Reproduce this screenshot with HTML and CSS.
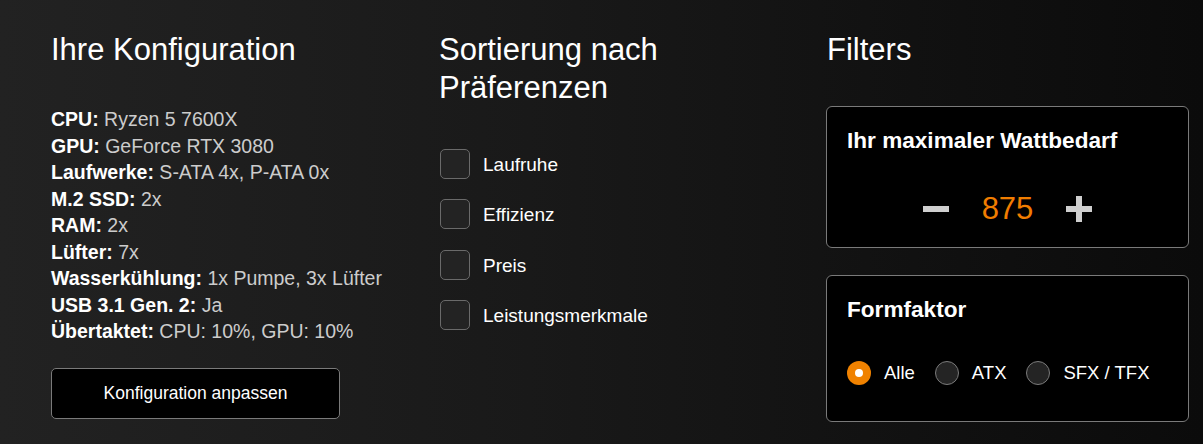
FILE: index.html
```html
<!DOCTYPE html>
<html lang="de">
<head>
<meta charset="utf-8">
<title>Konfiguration</title>
<link rel="stylesheet" href="styles.css">
</head>
<body>
<main class="page">
  <section class="col">
    <h2 class="heading">Ihre Konfiguration</h2>
    <ul class="spec-list">
      <li><b>CPU:</b> Ryzen 5 7600X</li>
      <li><b>GPU:</b> GeForce RTX 3080</li>
      <li><b>Laufwerke:</b> S-ATA 4x, P-ATA 0x</li>
      <li><b>M.2 SSD:</b> 2x</li>
      <li><b>RAM:</b> 2x</li>
      <li><b>Lüfter:</b> 7x</li>
      <li><b>Wasserkühlung:</b> 1x Pumpe, 3x Lüfter</li>
      <li><b>USB 3.1 Gen. 2:</b> Ja</li>
      <li><b>Übertaktet:</b> CPU: 10%, GPU: 10%</li>
    </ul>
    <button class="btn" type="button">Konfiguration anpassen</button>
  </section>

  <section class="col">
    <h2 class="heading">Sortierung nach Präferenzen</h2>
    <div class="check-list">
      <label class="check"><span class="box"></span><span>Laufruhe</span></label>
      <label class="check"><span class="box"></span><span>Effizienz</span></label>
      <label class="check"><span class="box"></span><span>Preis</span></label>
      <label class="check"><span class="box"></span><span>Leistungsmerkmale</span></label>
    </div>
  </section>

  <section class="col">
    <h2 class="heading">Filters</h2>
    <div class="cards">
      <div class="card card-watt">
        <h3 class="card-title">Ihr maximaler Wattbedarf</h3>
        <div class="stepper">
          <span class="step-btn" aria-label="weniger">
            <svg width="26" height="26" viewBox="0 0 26 26"><rect x="0" y="10" width="26" height="6" fill="#cfcfcf"/></svg>
          </span>
          <span class="watt">875</span>
          <span class="step-btn" aria-label="mehr">
            <svg width="26" height="26" viewBox="0 0 26 26"><rect x="0" y="10" width="26" height="6" fill="#cfcfcf"/><rect x="10" y="0" width="6" height="26" fill="#cfcfcf"/></svg>
          </span>
        </div>
      </div>
      <div class="card card-form">
        <h3 class="card-title">Formfaktor</h3>
        <div class="radios">
          <label class="radio"><span class="dot dot-on"></span><span>Alle</span></label>
          <label class="radio"><span class="dot"></span><span>ATX</span></label>
          <label class="radio"><span class="dot"></span><span>SFX / TFX</span></label>
        </div>
      </div>
    </div>
  </section>
</main>
</body>
</html>
```

FILE: styles.css
```css
* { box-sizing: border-box; }

html, body {
  margin: 0;
  height: 100%;
}

body {
  background: linear-gradient(to right, #222222 0%, #1a1a1a 40%, #0b0b0b 100%);
  color: #fff;
  font-family: "Liberation Sans", Arial, Helvetica, sans-serif;
  overflow: hidden;
}

.page {
  display: grid;
  grid-template-columns: 361px 361px 363px;
  column-gap: 27px;
  padding: 31px 0 0 51px;
}

.col {
  display: flex;
  flex-direction: column;
  align-items: flex-start;
}

.heading {
  margin: 0 0 37px;
  font-size: 31px;
  line-height: 38px;
  font-weight: normal;
  color: #fff;
}

.spec-list {
  list-style: none;
  margin: 0;
  padding: 0;
  font-size: 19.5px;
  line-height: 26.5px;
  color: #cccccc;
}

.spec-list b {
  color: #fff;
  font-weight: bold;
}

.btn {
  margin-top: 23.5px;
  width: 289px;
  height: 51px;
  background: #000;
  color: #fff;
  border: 1px solid #7a7a7a;
  border-radius: 5px;
  font-family: inherit;
  font-size: 17.5px;
  padding: 0;
}

.check-list {
  display: flex;
  flex-direction: column;
  gap: 20.3px;
  padding-top: 5px;
  margin-left: 1px;
}

.check {
  display: flex;
  align-items: center;
  gap: 13px;
  font-size: 19px;
  height: 30px;
  padding-top: 2px;
}

.box {
  width: 30px;
  height: 30px;
  border: 1.5px solid #6a6a6a;
  border-radius: 5px;
  background: #232323;
  flex: none;
  margin-top: -2px;
}

.cards {
  display: flex;
  flex-direction: column;
  gap: 27px;
  width: 363px;
  margin-left: -1px;
}

.card {
  background: #000;
  border: 1px solid #7a7a7a;
  border-radius: 6px;
  padding: 21px 20px 0;
}

.card-title {
  margin: 0;
  font-size: 22.6px;
  line-height: 26px;
  font-weight: bold;
}

.card-watt { height: 142px; }
.card-form { height: 147px; }

.stepper {
  margin-top: 35px;
  height: 40px;
  display: flex;
  justify-content: center;
  align-items: center;
  gap: 32px;
}

.step-btn {
  display: flex;
  width: 26px;
  height: 26px;
}

.watt {
  color: #f07d00;
  font-size: 31px;
  line-height: 40px;
  width: 53px;
  text-align: center;
}

.radios {
  margin-top: 38px;
  display: flex;
  align-items: center;
  gap: 20px;
}

.radio {
  display: flex;
  align-items: center;
  gap: 13px;
  font-size: 18.5px;
  height: 24px;
}

.dot {
  width: 24px;
  height: 24px;
  border-radius: 50%;
  background: #242424;
  border: 1.5px solid #7a7a7a;
  flex: none;
}

.dot-on {
  background: #f08200;
  border: none;
  display: flex;
  align-items: center;
  justify-content: center;
}

.dot-on::after {
  content: "";
  width: 8px;
  height: 8px;
  border-radius: 50%;
  background: #fff;
}
```
